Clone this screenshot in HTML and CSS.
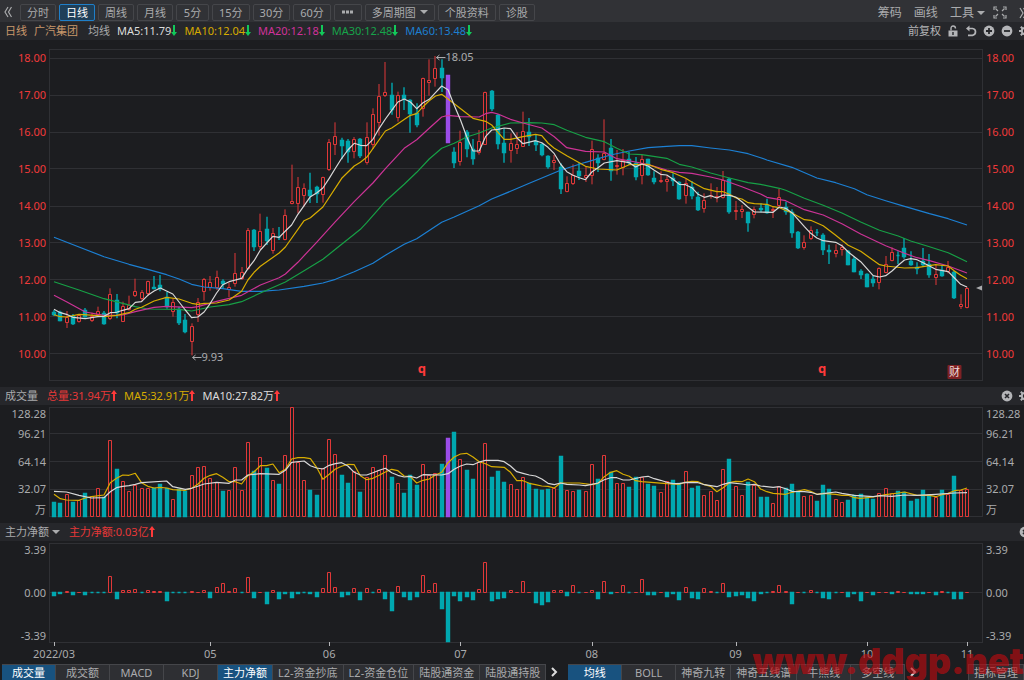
FILE: index.html
```html
<!DOCTYPE html>
<html lang="zh-CN">

<head>
    <meta charset="UTF-8">
    <meta name="viewport" content="width=device-width, initial-scale=1.0">
    <title>广汽集团 日线</title>
    <link rel="stylesheet" href="styles.css">
</head>
<body>
    <svg class="symbols" aria-hidden="true">
        <symbol id="arrow-up" viewBox="0 0 6 11">
            <path d="M3 0 L6 4 H4 V11 H2 V4 H0 Z" fill="currentColor"/>
        </symbol>
        <symbol id="arrow-down" viewBox="0 0 6 11">
            <path d="M3 11 L6 7 H4 V0 H2 V7 H0 Z" fill="currentColor"/>
        </symbol>
        <symbol id="gear" viewBox="0 0 12 12">
            <circle cx="6" cy="6" r="3.2" fill="none" stroke="currentColor" stroke-width="2"/>
            <path d="M6 0V2.5M6 9.5V12M0 6H2.5M9.5 6H12M1.8 1.8L3.5 3.5M8.5 8.5L10.2 10.2M1.8 10.2L3.5 8.5M8.5 3.5L10.2 1.8" stroke="currentColor" stroke-width="2"/>
        </symbol>
        <symbol id="close" viewBox="0 0 12 12">
            <circle cx="6" cy="6" r="5.4" fill="currentColor"/>
            <path d="M4 4L8 8M8 4L4 8" stroke="#26272b" stroke-width="1.6"/>
        </symbol>
    </svg>

    <header class="toolbar">
        <button class="icon-btn back" aria-label="收起">
            <svg width="8" height="12" viewBox="0 0 8 12"><path d="M4 1L1 6L4 11M7.5 1L4.5 6L7.5 11" fill="none" stroke="currentColor" stroke-width="1.2"/></svg>
        </button>
        <div class="periods">
            <button>分时</button>
            <button class="active">日线</button>
            <button>周线</button>
            <button>月线</button>
            <button>5分</button>
            <button>15分</button>
            <button>30分</button>
            <button>60分</button>
            <button aria-label="更多"><svg width="13" height="4" viewBox="0 0 13 4"><path d="M1 .5h3v3H1zM5 .5h3v3H5zM9 .5h3v3H9z" fill="currentColor"/></svg></button>
            <button>多周期图 <span class="caret"></span></button>
            <button>个股资料</button>
            <button>诊股</button>
        </div>
        <div class="tools">
            <button>筹码</button>
            <button>画线</button>
            <button class="menu">工具 <span class="caret"></span></button>
            <button class="expand" aria-label="全屏">
                <svg width="14" height="13" viewBox="0 0 14 13"><path d="M1 4V1H4M2.5 2.5L5 5M10 1H13V4M11.5 2.5L9 5M1 9V12H4M2.5 10.5L5 8M13 9V12H10M11.5 10.5L9 8" fill="none" stroke="currentColor" stroke-width="1.2"/></svg>
            </button>
            <button aria-label="展开">
                <svg width="8" height="12" viewBox="0 0 8 12"><path d="M1 1L4 6L1 11M4.5 1L7.5 6L4.5 11" fill="none" stroke="currentColor" stroke-width="1.2"/></svg>
            </button>
        </div>
    </header>

    <section class="info-row">
        <span class="stock">日线</span>
        <span class="stock name">广汽集团</span>
        <span>均线</span>
        <span class="white">MA5:11.79<svg class="arrow down"><use href="#arrow-down"/></svg></span>
        <span class="yellow">MA10:12.04<svg class="arrow down"><use href="#arrow-down"/></svg></span>
        <span class="magenta">MA20:12.18<svg class="arrow down"><use href="#arrow-down"/></svg></span>
        <span class="green">MA30:12.48<svg class="arrow down"><use href="#arrow-down"/></svg></span>
        <span class="blue">MA60:13.48<svg class="arrow down"><use href="#arrow-down"/></svg></span>
        <div class="row-icons">
            <button class="adjust">前复权</button>
            <button aria-label="锁定"><svg width="12" height="12" viewBox="0 0 12 12"><path d="M1.5 5.5H10.5V11.5H1.5Z" fill="currentColor"/><path d="M4 5.5V3.5Q4 1 6.2 1T8.5 3.5" fill="none" stroke="currentColor" stroke-width="1.4"/><path d="M6 7V10" stroke="#26272b" stroke-width="1.4"/></svg></button>
            <button aria-label="撤销"><svg width="12" height="12" viewBox="0 0 12 12"><path d="M1 3.5L4.5 .5V6.5Z" fill="currentColor"/><path d="M3 3.5H7.5Q10.5 3.8 10.5 6.8T7.5 10.3H3" fill="none" stroke="currentColor" stroke-width="1.7"/></svg></button>
            <button aria-label="放大"><svg width="12" height="12" viewBox="0 0 12 12"><circle cx="6" cy="6" r="5.4" fill="currentColor"/><path d="M6 3V9M3 6H9" stroke="#26272b" stroke-width="1.8"/></svg></button>
            <button aria-label="缩小"><svg width="12" height="12" viewBox="0 0 12 12"><circle cx="6" cy="6" r="5.4" fill="currentColor"/><path d="M3 6H9" stroke="#26272b" stroke-width="1.8"/></svg></button>
            <button aria-label="设置"><svg width="12" height="12"><use href="#gear"/></svg></button>
        </div>
    </section>

    <main>
        <svg id="price-chart" class="chart price"></svg>

        <section class="info-row">
            <span class="title">成交量</span>
            <span class="red">总量:31.94万<svg class="arrow up"><use href="#arrow-up"/></svg></span>
            <span class="yellow">MA5:32.91万<svg class="arrow up"><use href="#arrow-up"/></svg></span>
            <span class="white">MA10:27.82万<svg class="arrow up"><use href="#arrow-up"/></svg></span>
            <div class="row-icons">
                <button aria-label="关闭"><svg width="12" height="12"><use href="#close"/></svg></button>
                <button aria-label="设置"><svg width="12" height="12"><use href="#gear"/></svg></button>
            </div>
        </section>
        <svg id="volume-chart" class="chart volume"></svg>

        <section class="info-row">
            <button class="title">主力净额 <span class="caret"></span></button>
            <span class="red">主力净额:0.03亿<svg class="arrow up"><use href="#arrow-up"/></svg></span>
            <div class="row-icons">
                <button aria-label="关闭"><svg width="12" height="12"><use href="#close"/></svg></button>
            </div>
        </section>
        <svg id="flow-chart" class="chart flow"></svg>
    </main>

    <footer class="tabs">
        <div class="tab-group">
            <button class="active">成交量</button>
            <button>成交额</button>
            <button>MACD</button>
            <button>KDJ</button>
            <button class="active">主力净额</button>
            <button>L2-资金抄底</button>
            <button>L2-资金仓位</button>
            <button>陆股通资金</button>
            <button>陆股通持股</button>
        </div>
        <button class="next" aria-label="下一页"><svg width="7" height="10" viewBox="0 0 7 10"><path d="M1 1L5 5L1 9" fill="none" stroke="currentColor" stroke-width="2"/></svg></button>
        <div class="tab-group">
            <button class="active">均线</button>
            <button>BOLL</button>
            <button>神奇九转</button>
            <button>神奇五线谱</button>
            <button>牛熊线</button>
            <button>多空线</button>
        </div>
        <button class="next" aria-label="下一页"><svg width="7" height="10" viewBox="0 0 7 10"><path d="M1 1L5 5L1 9" fill="none" stroke="currentColor" stroke-width="2"/></svg></button>
        <button class="manage">指标管理</button>
    </footer>

    <div class="watermark">www.ddgp.net</div>

    <script src="chart.js"></script>
</body>

</html>
```

FILE: styles.css
```css
* {
    box-sizing: border-box;
}

body {
    margin: 0;
    position: relative;
    overflow-x: hidden;
    background-color: #1c1d20;
    color: #aaabad;
    font-family: "Noto Sans", "Noto Sans CJK SC", sans-serif;
    font-size: 11px;
    line-height: 16px;
}

button {
    margin: 0;
    padding: 0;
    border: none;
    background: none;
    color: inherit;
    font: inherit;
    white-space: nowrap;
    cursor: pointer;
}

.symbols {
    display: none;
}

.caret {
    display: inline-block;
    border: 4px solid transparent;
    border-top-color: currentColor;
    border-bottom: none;
    vertical-align: 2px;
}

/* top toolbar */
.toolbar {
    display: flex;
    align-items: center;
    height: 22px;
    padding-top: 2px;
    background-color: #313236;
    overflow: hidden;
}

.icon-btn {
    display: flex;
    justify-content: center;
    width: 16px;
    margin-right: 4px;
    flex: none;
}

.periods {
    display: flex;
    gap: 3px;
}

.periods button {
    display: flex;
    align-items: center;
    justify-content: center;
    min-width: 33px;
    height: 17px;
    padding: 0 6px;
    border: 1px solid #45464a;
    border-radius: 2px;
    line-height: 15px;
}

.periods button:has(svg) {
    min-width: 28px;
}

.periods .caret {
    margin-left: 4px;
}

.periods .active {
    border-color: #1f7fc9;
    background-color: #1f3f58;
    color: #ffffff;
}

.tools {
    display: flex;
    align-items: center;
    gap: 12px;
    margin-left: auto;
    margin-right: -3px;
    padding-top: 1px;
    font-size: 12px;
}

.tools svg {
    display: block;
}

.tools .expand {
    margin-left: -4px;
}

/* legend rows */
.info-row {
    display: flex;
    align-items: center;
    gap: 7px;
    height: 18px;
    padding-left: 5px;
    background-color: #26272b;
    white-space: nowrap;
    overflow: hidden;
}

.info-row .name {
    margin-right: 3px;
}

.info-row .title {
    margin-right: 2px;
}

.stock {
    color: #c9986b;
}

.white {
    color: #dcdcdc;
}

.yellow {
    color: #d6ab00;
}

.magenta {
    color: #d0329a;
}

.green {
    color: #17a34a;
}

.blue {
    color: #1c7fd0;
}

.red {
    color: #e83838;
}

.arrow {
    width: 6px;
    height: 11px;
    vertical-align: -1px;
}

.arrow.down {
    color: #12c95a;
}

.arrow.up {
    color: #ff3a3a;
}

.row-icons {
    display: flex;
    align-items: center;
    gap: 6px;
    margin-left: auto;
    margin-right: -7px;
    color: #b4b5b8;
}

.row-icons svg {
    display: block;
}

/* charts */
.chart {
    display: block;
    width: 100%;
    font-size: 11px;
}

.price {
    height: 347px;
}

.volume {
    height: 118px;
}

.flow {
    height: 123px;
}

.grid {
    fill: none;
    stroke: #2f3034;
}

.axis {
    fill: #aaabad;
}

.price .axis {
    fill: #f03a3a;
}

.tick {
    stroke: #b4b5b8;
}

.rise {
    fill: #1c1d20;
    stroke: #e03838;
}

.fall {
    fill: #00a8b0;
    stroke: #00a8b0;
    stroke-width: 1.4;
}

.picked {
    fill: #9b4de8;
    stroke: #9b4de8;
    stroke-width: 1.4;
}

.line {
    fill: none;
    stroke-width: 1.2;
    stroke-linejoin: round;
}

.ma5 {
    stroke: #d8d8d8;
}

.ma10 {
    stroke: #d8ad00;
}

.ma20 {
    stroke: #cc3396;
}

.ma30 {
    stroke: #17a046;
}

.ma60 {
    stroke: #1c80d4;
}

.volume .ma5 {
    stroke: #d8ad00;
}

.volume .ma10 {
    stroke: #d8d8d8;
}

.note {
    fill: #aaabad;
}

.note-line {
    fill: none;
    stroke: #aaabad;
}

.event {
    fill: #ff3a3a;
    font-size: 13px;
    font-weight: bold;
}

.report-box {
    fill: #7d2225;
}

.report {
    fill: #f0dede;
}

/* bottom tabs */
.tabs {
    display: flex;
    height: 16px;
    padding-left: 2px;
    overflow: hidden;
}

.tab-group {
    display: flex;
}

.tab-group button,
.manage {
    min-width: 54px;
    padding: 0 5px;
    border-top: 1px solid #45464a;
    border-right: 1px solid #45464a;
    background-color: #2e2f33;
    line-height: 14px;
}

.tab-group .active {
    background-color: #18527f;
    color: #ffffff;
}

.next {
    display: flex;
    align-items: center;
    width: 22px;
    padding-left: 5px;
    flex: none;
    color: #dcdcdc;
}

.manage {
    margin-left: auto;
    border-left: 1px solid #45464a;
}

.watermark {
    position: absolute;
    right: 0;
    bottom: -1px;
    color: rgba(190, 10, 15, 0.65);
    font-family: "Inter", "Liberation Sans", sans-serif;
    font-size: 36px;
    font-weight: 900;
    line-height: 40px;
    pointer-events: none;
}
```

FILE: chart.js
```js
// All y values are in thirds of a pixel, each pane subtracts its own top.

// direction, high, body top, body bottom, low
const candles = `
d 810 815 826 828|d 812 815 842 844|u 813 832 848 864|d 822 828 853 855|u 822 825 847 848|d 804 811 830 833
u 818 829 844 846|u 800 814 826 830|d 813 820 853 854|u 745 763 838 840|d 762 779 820 835|u 785 798 845 846
u 767 795 810 812|u 716 754 769 771|u 750 757 778 784|u 722 724 763 768|d 708 741 746 748|d 705 736 748 754
d 755 772 800 806|u 775 787 815 830|d 800 806 848 855|d 822 840 875 880|u 850 859 906 946|u 774 787 824 846
u 714 718 755 782|u 708 727 745 752|u 692 712 745 750|d 718 724 731 745|u 728 742 751 771|u 639 700 733 740
u 681 696 716 720|u 564 571 686 690|d 567 570 620 633|u 521 573 620 628|d 530 568 602 615|u 564 580 633 641
d 561 591 594 600|u 508 526 599 601|u 374 484 491 493|u 411 441 491 520|u 430 445 467 500|d 398 450 468 489
d 437 441 462 489|u 410 412 464 488|u 297 307 390 393|u 247 289 314 345|d 293 300 318 358|d 297 303 336 368
u 291 297 335 355|d 294 297 347 354|u 247 291 368 374|u 205 222 314 327|u 132 169 248 287|u 66 157 169 171
d 128 165 210 224|u 155 166 235 245|d 142 166 178 210|d 178 180 222 278|d 190 220 255 262|u 113 115 206 230
u 58 121 130 167|u 48 83 116 140|d 58 83 114 156|p 106 106 308 308|d 322 337 369 384|u 272 307 365 377
d 270 276 328 352|d 297 327 357 374|u 270 303 338 344|u 155 156 314 315|d 150 153 208 213|d 222 225 312 328
d 265 310 339 368|u 280 310 334 368|u 277 313 328 342|u 215 273 320 321|d 234 276 290 318|d 283 303 315 333
d 310 313 345 349|d 346 348 382 386|u 345 361 368 390|d 370 380 446 462|u 409 430 455 457|u 373 405 433 435
d 368 392 408 420|u 380 405 413 426|u 302 328 409 433|d 343 355 369 396|u 238 338 359 361|d 297 324 394 422
u 330 376 382 404|u 327 360 385 406|d 335 357 370 375|d 351 369 410 421|u 345 356 409 433|d 356 357 406 407
d 394 414 425 433|u 394 420 427 429|u 405 418 425 455|d 400 413 424 438|d 424 426 476 479|u 416 430 469 491
d 423 440 467 478|d 455 471 510 513|u 460 479 507 518|u 430 466 469 476|u 441 468 473 487|u 393 420 474 476
d 413 416 515 521|u 483 511 515 540|u 495 508 515 534|d 515 517 548 575|u 500 507 526 535|d 490 503 511 517
d 476 496 519 521|u 499 506 514 534|u 447 472 497 500|d 485 502 516 524|d 508 516 580 593|d 573 576 624 627
u 586 607 623 629|u 559 571 596 600|d 567 575 578 588|d 580 585 629 645|d 614 631 636 672|u 613 629 642 652
u 613 622 629 647|d 630 633 674 676|d 650 657 695 697|d 688 693 706 717|d 700 703 740 742|d 707 717 728 740
u 682 685 730 748|u 648 673 698 700|u 622 637 662 664|d 634 645 648 672|d 594 624 652 656|d 634 663 675 677
d 667 680 686 703|d 624 663 674 680|d 642 673 706 713|u 675 702 713 735|d 675 690 707 710|u 663 680 697 700
d 693 696 775 777|u 763 793 800 807|u 741 744 803 805`.trim().split(/[|\n]/).map(row => {
    const [dir, ...v] = row.split(" ");
    return { dir, high: +v[0], top: +v[1], bottom: +v[2], low: +v[3] };
});

const volumes = [
    351, 354, 328, 351, 345, 325, 333, 310, 337, 165, 253, 289, 317, 301, 310, 310, 310, 298, 310, 341,
    313, 317, 271, 247, 244, 280, 290, 319, 314, 247, 314, 170, 259, 217, 250, 286, 298, 211, 66, 232,
    286, 314, 330, 250, 162, 208, 270, 295, 259, 322, 275, 247, 256, 210, 277, 295, 325, 271, 301, 236,
    270, 264, 238, 159, 142, 223, 255, 282, 232, 175, 277, 258, 290, 296, 311, 277, 295, 311, 316, 313,
    308, 212, 314, 317, 316, 317, 236, 283, 210, 262, 293, 293, 305, 277, 277, 298, 304, 322, 288, 285,
    293, 258, 308, 304, 331, 317, 344, 253, 223, 304, 331, 292, 299, 335, 337, 355, 304, 310, 298, 319,
    334, 331, 349, 301, 311, 341, 352, 346, 331, 328, 335, 343, 325, 309, 325, 319, 322, 349, 343, 316,
    331, 337, 316, 328, 274, 316, 312
];

const flows = [
    -12, -7, 7, -10, 4, -10, -4, -4, -4, 50, -20, 10, 9, 13, -2, 10, 7, 7, -28, -4,
    -4, -4, 7, 4, 9, -17, 18, 29, 7, 15, -3, 47, -18, 4, -37, 9, -22, -7, -18, -7,
    -4, -7, -14, 16, 63, 18, -15, -10, 15, -23, 15, -4, 12, -20, -58, 20, -15, -23, -14, 55,
    10, 29, -50, -151, -12, -28, -14, -25, 13, 92, -28, -20, -17, 10, 2, 35, 2, -34, -39, -31,
    10, 10, -12, 23, -4, 4, 10, -20, 37, -6, 2, 23, -4, 2, 41, -10, -10, 2, -15, -7,
    -23, 18, -17, -20, 15, 7, -4, 29, -14, -12, -10, -17, -26, -7, -4, 7, 23, 7, -36, 4,
    -4, 10, -4, -17, -20, -4, 2, -15, -7, -26, 2, -10, 4, 4, -7, 7, 4, -7, -7, -7,
    2, -10, 7, -4, -20, -20, 2
];

// "index y" pairs
const priceLines = {
    ma60: "0 592,4 621,8 650,12 673,15 688,18 704,20 717,22 733,24 741,27 746,30 754,33 754,36 750,40 739,43 729,45 718,48 695,51 670,53 646,56 613,58 596,62 547,64 531,68 497,70 477,73 454,76 430,81 391,85 367,89 345,92 333,95 323,98 319,100 317,102 317,105 324,108 330,111 341,113 353,114 360,118 382,122 414,125 428,128 446,130 464,133 482,136 499,140 521,143 536,146 555",
    ma30: "0 725,4 750,8 776,11 790,13 800,15 807,20 808,22 813,25 801,28 794,30 785,33 759,37 726,40 692,43 658,45 628,48 583,49 568,50 548,53 484,56 433,58 397,60 357,62 325,64 310,66 291,68 279,70 264,73 249,76 248,78 249,80 254,82 271,85 292,88 305,90 325,92 342,94 344,98 355,100 373,102 381,105 399,108 414,111 428,113 433,116 445,117 451,120 475,123 496,126 519,129 546,132 571,135 588,137 603,140 620,143 638,146 665",
    ma20: "0 766,2 785,5 816,8 826,11 825,13 815,16 802,18 799,22 803,23 800,26 784,30 766,33 735,36 713,37 702,39 667,42 607,45 545,48 485,51 429,53 386,56 325,58 299,60 265,62 231,63 226,65 230,68 231,69 221,70 217,71 222,73 238,75 249,78 264,80 290,82 323,85 334,88 336,90 356,93 366,95 374,98 390,100 397,102 400,105 411,107 420,110 440,113 462,114 472,117 482,120 509,123 525,126 551,129 582,133 617,136 640,138 653,140 662,143 678,146 699",
    ma10: "0 824,1 830,2 831,4 823,7 827,8 830,10 826,12 818,13 808,14 802,16 783,18 772,20 777,22 790,23 793,24 790,26 789,28 780,30 754,31 720,32 697,33 679,36 639,37 621,40 542,41 533,43 501,46 415,48 378,49 367,50 352,53 273,54 264,57 226,58 221,59 200,60 182,61 168,62 163,63 177,64 191,67 235,69 244,70 255,71 277,72 298,73 298,75 290,77 283,78 287,79 309,80 325,82 347,84 368,85 379,87 387,90 390,92 374,95 373,97 388,99 398,101 415,102 426,104 446,106 455,107 455,108 463,109 473,110 477,111 488,112 491,114 493,115 500,116 503,118 519,120 539,121 541,123 557,125 586,127 616,129 634,132 674,133 678,136 684,138 683,141 674,143 678,144 693,145 706,146 716",
    ma5: "0 808,1 818,2 823,3 832,5 836,7 830,8 829,9 818,10 817,11 811,12 806,13 787,14 785,15 766,16 753,17 744,19 762,21 810,22 833,23 831,24 816,25 790,26 759,27 734,28 725,30 715,31 686,32 662,33 630,35 589,36 592,37 573,38 555,39 523,40 497,41 470,42 459,43 444,44 415,45 385,46 355,47 330,48 310,49 316,50 317,51 298,52 265,53 237,54 211,55 186,56 177,57 186,58 206,59 188,60 178,61 158,62 138,63 149,64 196,65 240,66 290,67 333,68 333,69 290,70 270,71 268,72 264,73 266,74 293,75 311,77 302,78 308,79 322,80 341,81 372,82 395,83 406,84 413,85 419,86 396,87 383,88 369,90 362,92 368,93 381,94 372,95 378,96 391,97 403,98 405,99 418,100 433,101 434,102 443,103 463,104 472,105 467,106 474,107 465,108 466,109 471,110 485,111 502,112 516,115 517,116 501,117 505,118 518,119 539,120 560,121 580,122 594,123 602,125 607,126 617,127 636,129 665,131 707,132 711,133 707,134 693,135 676,136 660,137 656,138 659,139 668,141 688,143 695,144 714,145 733,146 741"
};

const volumeLines = {
    ma5: "0 328,1 341,2 345,4 346,5 339,6 335,8 330,9 293,10 280,11 270,12 271,13 265,14 293,15 304,16 309,17 307,18 309,19 314,21 316,22 310,23 298,24 280,25 271,26 266,27 277,28 290,29 290,30 297,31 272,32 260,33 242,34 242,35 237,36 263,37 253,38 222,39 218,40 218,41 221,42 247,43 283,44 268,45 252,46 244,47 238,48 239,49 272,50 284,51 280,52 271,53 261,54 253,55 257,56 273,57 275,58 294,59 286,60 282,61 270,62 262,63 233,64 216,65 207,66 205,67 216,68 230,69 236,70 245,72 247,73 262,74 287,75 287,76 295,77 299,78 303,79 304,80 309,81 294,84 294,86 299,87 295,88 275,89 262,90 257,91 268,92 274,93 287,94 290,96 293,98 296,100 298,101 292,102 289,103 290,104 299,105 304,106 320,107 308,108 293,109 289,110 290,111 282,112 290,113 312,114 320,115 325,117 328,118 322,119 318,120 314,121 319,122 328,123 325,125 328,126 331,127 331,128 338,129 340,131 336,133 329,135 324,136 321,138 331,140 331,141 335,142 329,143 325,144 317,145 315,146 309",
    ma10: "0 319,2 321,4 331,6 339,8 338,9 320,10 308,11 304,12 302,13 298,14 293,18 288,19 305,21 313,22 310,23 304,24 297,26 292,28 295,29 285,30 285,31 270,33 266,36 268,37 256,38 232,40 228,41 242,42 249,43 252,44 241,45 236,46 233,47 243,48 262,49 270,50 270,51 263,52 256,53 250,54 263,55 271,56 276,57 274,58 279,59 269,62 270,63 266,64 253,65 243,66 237,67 239,68 231,69 226,71 226,72 230,73 243,74 260,75 265,76 270,77 273,78 282,79 295,80 299,81 294,82 298,84 300,85 302,86 298,87 294,88 284,89 278,90 278,91 285,92 285,94 276,95 274,96 281,97 286,98 292,99 296,100 296,101 292,103 293,104 299,106 305,107 298,108 293,110 297,111 300,112 298,113 303,115 307,116 305,117 311,118 319,120 320,121 322,122 328,123 326,125 321,126 325,127 328,128 331,131 335,132 332,134 334,136 330,138 331,141 328,144 324,146 323"
};

const months = [[0, "2022/03"], [25, "05"], [44, "06"], [65, "07"], [86, "08"], [109, "09"], [130, "10"], [146, "11"]];

const LEFT = 50;
const RIGHT = 42;

function add(svg, tag, attrs, text) {
    const el = document.createElementNS("http://www.w3.org/2000/svg", tag);
    for (const key in attrs) {
        el.setAttribute(key, attrs[key]);
    }
    if (text) {
        el.textContent = text;
    }
    svg.appendChild(el);
}

function xAt(i) {
    const width = document.body.clientWidth;
    return LEFT + 4 + i * (width - LEFT - RIGHT - 19) / (candles.length - 1);
}

function drawFrame(svg, top, bottom, rows) {
    const width = document.body.clientWidth;
    svg.innerHTML = "";
    add(svg, "rect", { class: "grid", x: LEFT - 0.5, y: top + 0.5, width: width - LEFT - RIGHT + 1, height: bottom - top });
    rows.forEach(y => add(svg, "path", { class: "grid", d: `M${LEFT} ${y + 0.5}H${width - RIGHT}` }));
}

function drawLabels(svg, labels) {
    const width = document.body.clientWidth;
    labels.forEach(([y, text]) => {
        add(svg, "text", { class: "axis", x: LEFT - 4, y: y + 4, "text-anchor": "end" }, text);
        add(svg, "text", { class: "axis", x: width - RIGHT + 4, y: y + 4 }, text);
    });
}

// A path, as a rect without height would not be painted.
function drawBar(svg, type, i, top, bottom) {
    const x = Math.round(xAt(i)) - 2;
    const y = Math.round(top);
    const height = Math.max(Math.round(bottom) - y - 1, 0);
    add(svg, "path", { class: type, d: `M${x + 0.5} ${y + 0.5}h3v${height}h-3z` });
}

function drawLines(svg, lines, top) {
    for (const name in lines) {
        const points = lines[name].split(",").map(pair => {
            const [i, y] = pair.split(" ");
            return xAt(+i).toFixed(1) + "," + ((y - top) / 3).toFixed(1);
        });
        add(svg, "polyline", { class: "line " + name, points: points.join(" ") });
    }
}

const types = { u: "rise", d: "fall", p: "picked" };

function drawPrice() {
    const svg = document.getElementById("price-chart");
    drawFrame(svg, 9, 340, [18, 55, 92, 128, 166, 202, 239, 276, 313]);
    for (let i = 0; i < 9; i++) {
        drawLabels(svg, [[18 + i * 37, (18 - i).toFixed(2)]]);
    }

    candles.forEach((c, i) => {
        add(svg, "path", { class: types[c.dir], d: `M${Math.round(xAt(i))} ${c.high / 3}V${c.low / 3}` });
        drawBar(svg, types[c.dir], i, c.top / 3, c.bottom / 3);
    });
    drawLines(svg, priceLines, 0);

    const high = xAt(61);
    add(svg, "path", { class: "note-line", d: `M${high + 1} 17.5h9M${high + 4} 15l-3 2.5l3 2.5` });
    add(svg, "text", { class: "note", x: high + 10, y: 21 }, "18.05");
    const low = xAt(22);
    add(svg, "path", { class: "note-line", d: `M${low + 1} 317.5h9M${low + 4} 315l-3 2.5l3 2.5` });
    add(svg, "text", { class: "note", x: low + 10, y: 321 }, "9.93");

    [59, 123].forEach(i => add(svg, "text", { class: "event", x: xAt(i) - 1, y: 333, "text-anchor": "middle" }, "q"));
    add(svg, "rect", { class: "report-box", x: xAt(144) - 7, y: 325, width: 14, height: 14, rx: 1 });
    add(svg, "text", { class: "report", x: xAt(144), y: 336, "text-anchor": "middle" }, "财");

    const edge = document.body.clientWidth - RIGHT;
    add(svg, "path", { class: "note", d: `M${edge - 6} 248l6 -2.5v5z` });
}

function drawVolume() {
    const svg = document.getElementById("volume-chart");
    drawFrame(svg, 2, 111, [28, 56, 84]);
    drawLabels(svg, [[9, "128.28"], [29, "96.21"], [57, "64.14"], [84, "32.07"], [105, "万"]]);
    volumes.forEach((v, i) => drawBar(svg, types[candles[i].dir], i, (v - 60) / 3, 112));
    drawLines(svg, volumeLines, 60);
}

function drawFlow() {
    const svg = document.getElementById("flow-chart");
    drawFrame(svg, 2, 101, [51]);
    drawLabels(svg, [[9, "3.39"], [52, "0.00"], [95, "-3.39"]]);
    flows.forEach((v, i) => {
        if (v > 0) {
            drawBar(svg, "rise", i, 52 - v / 3, 52);
        } else {
            drawBar(svg, "fall", i, 51, 51 - v / 3);
        }
    });
    months.forEach(([i, text]) => {
        add(svg, "path", { class: "tick", d: `M${Math.round(xAt(i)) + 0.5} 101v4` });
        add(svg, "text", { class: "axis", x: xAt(i), y: 117, "text-anchor": "middle" }, text);
    });
}

function draw() {
    drawPrice();
    drawVolume();
    drawFlow();
}

draw();
window.addEventListener("resize", draw);
```
